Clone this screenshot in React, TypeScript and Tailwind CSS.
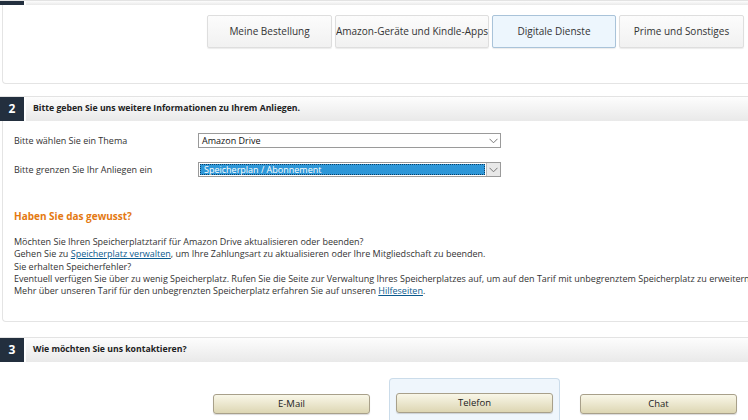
import React from 'react';

const font = { fontFamily: "'Open Sans', 'Liberation Sans', sans-serif" };

function SectionHeader({ num, title, cut }: { num: string; title?: string; cut?: boolean }) {
  return (
    <div className={`flex ${cut ? 'h-[5px]' : 'h-[25px]'} border-t border-[#e3e3e3]`}>
      <div className="w-[24px] shrink-0 bg-[#232f3e] text-white font-bold text-[12px] flex items-center justify-center">
        {!cut && num}
      </div>
      <div className="flex-1 ml-[2px] bg-gradient-to-b from-[#fdfdfd] to-[#e9e9e9] flex items-center pl-[7px] text-[8.7px] font-bold text-[#222]">
        {title}
      </div>
    </div>
  );
}

function Tab({ label, active }: { label: string; active?: boolean }) {
  return (
    <div
      className={`h-[33px] flex items-center justify-center whitespace-nowrap overflow-hidden text-[10px] text-[#333] rounded-[2px] border shadow-[0_1px_1px_rgba(0,0,0,0.08)] ${
        active
          ? 'w-[124px] bg-[#edf6fd] border-[#a9c3d9]'
          : 'bg-gradient-to-b from-[#fcfcfc] to-[#f1f1f1] border-[#dedede]'
      }`}
    >
      {label}
    </div>
  );
}

function Select({ value, active }: { value: string; active?: boolean }) {
  return (
    <div className="w-[303px] h-[15px] border border-[#9a9a9a] flex bg-white">
      <div
        className={`flex-1 flex items-center pl-[3px] text-[9px] ${
          active ? 'bg-[#2e97d8] text-white m-[1px] border border-dotted border-[#0d3f66]' : 'text-[#111]'
        }`}
      >
        {value}
      </div>
      <div className={`w-[14px] flex items-center justify-center ${active ? 'bg-[#e8e8e8] border-l border-[#bbb]' : ''}`}>
        <svg width="9" height="6" viewBox="0 0 9 6" fill="none" stroke="#777" strokeWidth="1">
          <path d="M0.5 0.8 L4.5 4.8 L8.5 0.8" />
        </svg>
      </div>
    </div>
  );
}

function ContactButton({ label }: { label: string }) {
  return (
    <div className="w-[157px] h-[20px] rounded-[3px] border border-[#a8a08a] bg-gradient-to-b from-[#f9f7e8] to-[#ddd6b3] shadow-[0_1px_1px_rgba(0,0,0,0.15)] flex items-center justify-center text-[9.5px] text-[#222]">
      {label}
    </div>
  );
}

export default function App() {
  return (
    <div className="w-[748px] h-[420px] overflow-hidden bg-white" style={font}>
      <div className="w-[760px]">
        {/* Section 1 (cut at top) */}
        <SectionHeader num="1" cut />
        <div className="ml-[2px] h-[79px] border-l border-b border-[#e4e4e4] rounded-bl-[4px] flex gap-[3px] pl-[204px] pt-[10px]">
          <div className="w-[125px]"><Tab label="Meine Bestellung" /></div>
          <div className="w-[154px] text-[9.5px]"><Tab label="Amazon-Geräte und Kindle-Apps" /></div>
          <Tab label="Digitale Dienste" active />
          <div className="w-[125px]"><Tab label="Prime und Sonstiges" /></div>
        </div>

        {/* Section 2 */}
        <div className="mt-[12px]">
          <SectionHeader num="2" title="Bitte geben Sie uns weitere Informationen zu Ihrem Anliegen." />
          <div className="ml-[2px] h-[201px] border-l border-b border-[#e4e4e4] rounded-bl-[4px] pl-[11px] pt-[12px] text-[9px] text-[#333]">
            <div className="flex items-center h-[15px]">
              <div className="w-[184px]">Bitte wählen Sie ein Thema</div>
              <Select value="Amazon Drive" />
            </div>
            <div className="flex items-center h-[15px] mt-[14px]">
              <div className="w-[184px]">Bitte grenzen Sie Ihr Anliegen ein</div>
              <Select value="Speicherplan / Abonnement" active />
            </div>
            <div className="mt-[32px] text-[10px] font-bold text-[#e47911]">Haben Sie das gewusst?</div>
            <div className="mt-[12px] leading-[12.3px] whitespace-nowrap">
              <div>Möchten Sie Ihren Speicherplatztarif für Amazon Drive aktualisieren oder beenden?</div>
              <div>
                Gehen Sie zu <span className="text-[#0b5a8e] underline">Speicherplatz verwalten</span>, um Ihre Zahlungsart zu aktualisieren oder Ihre Mitgliedschaft zu beenden.
              </div>
              <div>Sie erhalten Speicherfehler?</div>
              <div>
                Eventuell verfügen Sie über zu wenig Speicherplatz. Rufen Sie die Seite zur Verwaltung Ihres Speicherplatzes auf, um auf den Tarif mit unbegrenztem Speicherplatz zu erweitern.
              </div>
              <div>
                Mehr über unseren Tarif für den unbegrenzten Speicherplatz erfahren Sie auf unseren <span className="text-[#0b5a8e] underline">Hilfeseiten</span>.
              </div>
            </div>
          </div>
        </div>

        {/* Section 3 */}
        <div className="mt-[15px]">
          <SectionHeader num="3" title="Wie möchten Sie uns kontaktieren?" />
          <div className="flex items-end h-[60px] pl-[213px]">
            <div className="mb-[8px]"><ContactButton label="E-Mail" /></div>
            <div className="ml-[19px] w-[171px] h-[44px] bg-[#eff6fc] border border-b-0 border-[#cbdcea] rounded-t-[4px] pt-[14px] pl-[6px]">
              <ContactButton label="Telefon" />
            </div>
            <div className="ml-[20px] mb-[8px]"><ContactButton label="Chat" /></div>
          </div>
        </div>
      </div>
    </div>
  );
}
